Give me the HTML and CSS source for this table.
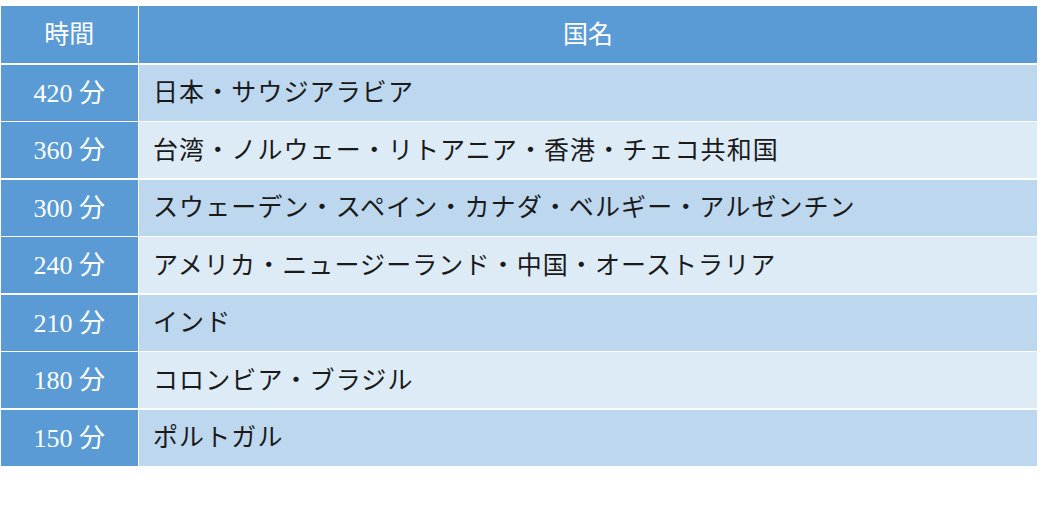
FILE: index.html
```html
<!DOCTYPE html>
<html lang="ja">
<head>
<meta charset="utf-8">
<title>時間と国名</title>
<link rel="stylesheet" href="styles.css">
</head>
<body>
<div class="table">
  <div class="cell head">時間</div>
  <div class="cell head">国名</div>

  <div class="cell time">420 分</div>
  <div class="cell name odd">日本・サウジアラビア</div>

  <div class="cell time">360 分</div>
  <div class="cell name even">台湾・ノルウェー・リトアニア・香港・チェコ共和国</div>

  <div class="cell time">300 分</div>
  <div class="cell name odd">スウェーデン・スペイン・カナダ・ベルギー・アルゼンチン</div>

  <div class="cell time">240 分</div>
  <div class="cell name even">アメリカ・ニュージーランド・中国・オーストラリア</div>

  <div class="cell time">210 分</div>
  <div class="cell name odd">インド</div>

  <div class="cell time">180 分</div>
  <div class="cell name even">コロンビア・ブラジル</div>

  <div class="cell time">150 分</div>
  <div class="cell name odd">ポルトガル</div>
</div>
</body>
</html>
```

FILE: styles.css
```css
html, body {
  margin: 0;
  padding: 0;
  background: #ffffff;
}

body {
  padding: 6px 0 0 1px;
  font-family: "Liberation Serif", "Noto Sans CJK JP", serif;
}

.table {
  width: 1036px;
  display: grid;
  grid-template-columns: 136.5px 1fr;
  grid-template-rows: 57px repeat(7, 56px);
  column-gap: 1.5px;
  row-gap: 1.5px;
  background: #ffffff;
}

.cell {
  display: flex;
  align-items: center;
  padding-bottom: 5px;
}

.head {
  background: #5b9bd5;
  color: #ffffff;
  justify-content: center;
  font-family: "Noto Sans CJK JP", sans-serif;
  font-size: 25px;
}

.time {
  background: #5b9bd5;
  color: #ffffff;
  justify-content: center;
  font-size: 26px;
}

.name {
  color: #1a1a1a;
  padding-left: 14px;
  font-family: "Noto Sans CJK JP", sans-serif;
  font-size: 25px;
  letter-spacing: 1.1px;
}

.odd {
  background: #bdd7ee;
}

.even {
  background: #ddebf7;
}
```
